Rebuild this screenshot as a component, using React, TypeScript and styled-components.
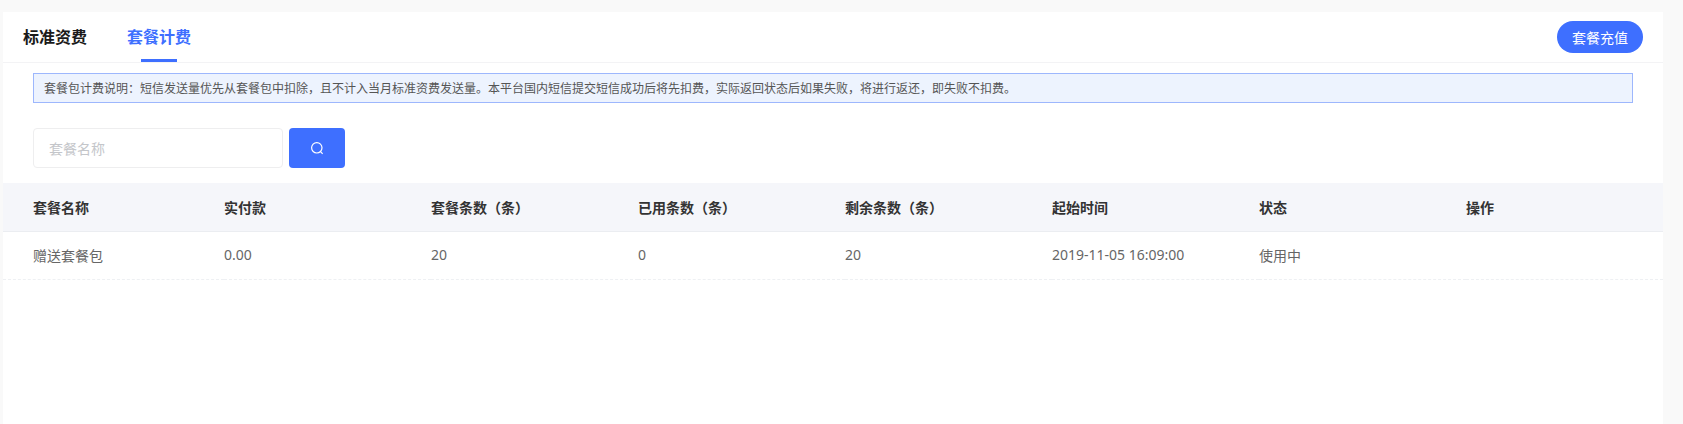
import React from 'react';
import styled, { createGlobalStyle } from 'styled-components';

const GlobalStyle = createGlobalStyle`
  html, body {
    margin: 0;
    padding: 0;
    height: 100%;
    overflow: hidden;
    background: #f9f9f9;
    font-family: "Noto Sans", "Noto Sans CJK SC", "Liberation Sans", sans-serif;
  }
  * {
    box-sizing: border-box;
  }
`;

const Page = styled.div`
  height: 424px;
  padding: 12px 20px 0 3px;
  overflow: hidden;
`;

const Card = styled.div`
  background: #fff;
  height: 100%;
`;

const TabBar = styled.div`
  display: flex;
  justify-content: space-between;
  align-items: center;
  height: 51px;
  padding: 0 20px;
  border-bottom: 1px solid #f3f3f5;
`;

const Tabs = styled.div`
  display: flex;
  gap: 40px;
  height: 50px;
`;

const Tab = styled.div<{ $active?: boolean }>`
  position: relative;
  font-size: 16px;
  font-weight: 700;
  line-height: 51px;
  color: ${(p) => (p.$active ? '#3e6fff' : '#1a1a1a')};
  &::after {
    content: '';
    display: ${(p) => (p.$active ? 'block' : 'none')};
    position: absolute;
    left: 14px;
    bottom: 0;
    width: 36px;
    height: 3px;
    background: #3e6fff;
  }
`;

const RechargeButton = styled.button`
  width: 86px;
  height: 32px;
  margin-top: -1px;
  border: none;
  border-radius: 16px;
  background: #3e6fff;
  color: #fff;
  font-family: inherit;
  font-size: 14px;
  padding: 0;
`;

const Body = styled.div`
  padding-top: 10px;
`;

const Notice = styled.div`
  margin: 0 30px;
  height: 30px;
  padding: 0 10px;
  border: 1px solid #9db7fd;
  background: #edf3fe;
  color: #555;
  font-size: 12px;
  line-height: 29px;
`;

const SearchRow = styled.div`
  display: flex;
  gap: 6px;
  padding: 25px 30px 15px;
`;

const SearchInput = styled.input`
  width: 250px;
  height: 40px;
  padding: 0 15px;
  border: 1px solid #eeeeef;
  border-radius: 4px;
  font-family: inherit;
  font-size: 14px;
  outline: none;
  &::placeholder {
    color: #c4c6ca;
  }
`;

const SearchButton = styled.button`
  display: flex;
  align-items: center;
  justify-content: center;
  width: 56px;
  height: 40px;
  padding: 0;
  border: none;
  border-radius: 4px;
  background: #3e6fff;
`;

const Table = styled.table`
  width: 100%;
  border-collapse: collapse;
  table-layout: fixed;
  font-size: 14px;
`;

const HeadCell = styled.th`
  width: 207px;
  height: 48px;
  padding: 0;
  background: #f5f6fa;
  border-bottom: 1px solid #ebedf1;
  color: #333;
  font-weight: 700;
  text-align: left;
  &:first-child {
    padding-left: 30px;
    width: 221px;
  }
  &:last-child {
    width: auto;
  }
`;

const Cell = styled.td`
  height: 48px;
  padding: 0 0 1px;
  border-bottom: 1px dashed #eef0f3;
  color: #666;
  &:first-child {
    padding-left: 30px;
  }
`;

const columns = ['套餐名称', '实付款', '套餐条数（条）', '已用条数（条）', '剩余条数（条）', '起始时间', '状态', '操作'];
const row = ['赠送套餐包', '0.00', '20', '0', '20', '2019-11-05 16:09:00', '使用中', ''];

export default function App() {
  return (
    <Page>
      <GlobalStyle />
      <Card>
        <TabBar>
          <Tabs>
            <Tab>标准资费</Tab>
            <Tab $active>套餐计费</Tab>
          </Tabs>
          <RechargeButton>套餐充值</RechargeButton>
        </TabBar>
        <Body>
          <Notice>
            套餐包计费说明：短信发送量优先从套餐包中扣除，且不计入当月标准资费发送量。本平台国内短信提交短信成功后将先扣费，实际返回状态后如果失败，将进行返还，即失败不扣费。
          </Notice>
          <SearchRow>
            <SearchInput placeholder="套餐名称" />
            <SearchButton aria-label="搜索">
              <svg width="14" height="14" viewBox="0 0 14 14" fill="none" stroke="#fff" strokeWidth="1.2">
                <circle cx="6.8" cy="6.8" r="5.2" />
                <path d="M10.6 10.6 L12.6 12.8" />
              </svg>
            </SearchButton>
          </SearchRow>
          <Table>
            <thead>
              <tr>
                {columns.map((c) => (
                  <HeadCell key={c}>{c}</HeadCell>
                ))}
              </tr>
            </thead>
            <tbody>
              <tr>
                {row.map((v, i) => (
                  <Cell key={i}>{v}</Cell>
                ))}
              </tr>
            </tbody>
          </Table>
        </Body>
      </Card>
    </Page>
  );
}
